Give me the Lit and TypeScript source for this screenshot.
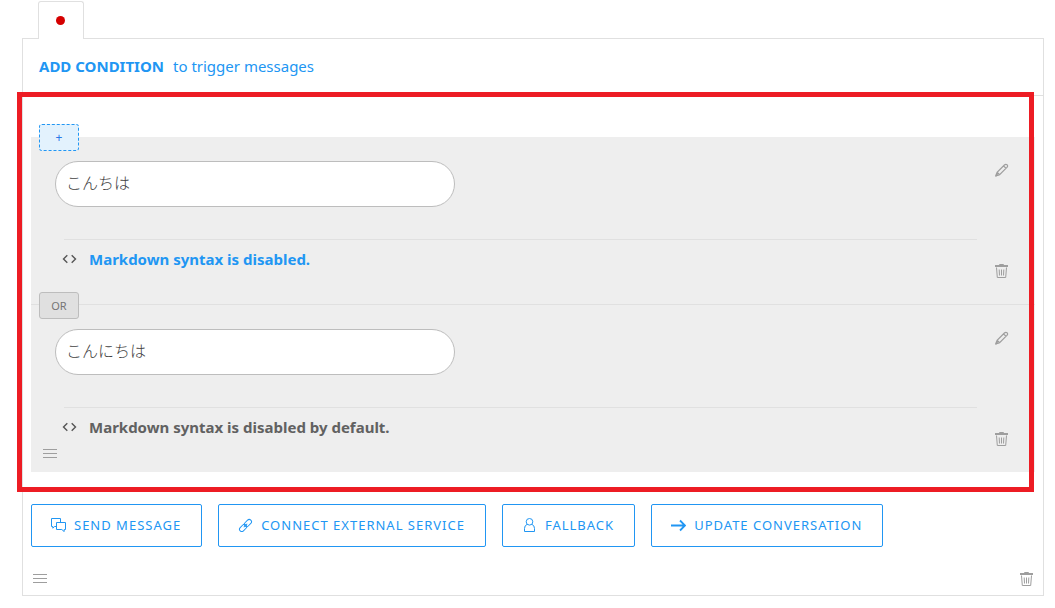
import { LitElement, html, css, svg, nothing } from "lit";
import { customElement, property, state } from "lit/decorators.js";
import { classMap } from "lit/directives/class-map.js";

const icons: Record<string, unknown> = {
  pencil: svg`<path d="M1 12.8 2.1 9.3 9.4 2 Q10.8 .7 12.1 1.8 Q13.2 3 11.9 4.4 L4.6 11.7Z M2.1 9.3 4.6 11.7 M8.5 2.9 11 5.3" stroke-width="1.2" /><path d="M.8 13 1.5 10.8 3 12.3Z" fill="currentColor" />`,
  trash: svg`<path d="M0 2H13" stroke-width="2" /><path d="M4.5 1V.5H8.5V1" /><path d="M1.5 3.5 2.3 13.5H10.7L11.5 3.5" /><path d="M4.2 5.5 4.5 11.5M6.5 5.5V11.5M8.8 5.5 8.5 11.5" />`,
  menu: svg`<path d="M0 2.5H14M0 6.5H14M0 10.5H14" />`,
  code: svg`<path d="M5.3 3.2 1.5 7 5.3 10.8M9.7 3.2 13.5 7 9.7 10.8" stroke-width="1.4" />`,
  chat: svg`<path d="M5 8.5H3.6L1.8 10.2V8.5H.5V.5H9.5V4" /><path d="M5.5 4.5H14.5V11.5H13.2V13.6L10.8 11.5H5.5Z" />`,
  link: svg`<g transform="rotate(-45 7.5 7.5)"><rect x="0" y="5.2" width="8.2" height="4.6" rx="2.3" /><rect x="6.8" y="5.2" width="8.2" height="4.6" rx="2.3" /><path d="M5 7.5H10" /></g>`,
  user: svg`<circle cx="7.5" cy="3.8" r="3.3" /><path d="M5 6.4Q2.5 7.5 2.5 10.5V13.5H12.5V10.5Q12.5 7.5 10 6.4" />`,
  arrow: svg`<path d="M0 7.5H14M9 2.5 14 7.5 9 12.5" stroke-width="1.8" />`,
};

const icon = (name: string, wide = false) => svg`<svg
  class="icon" aria-hidden="true" width=${wide ? 15 : 14} height="14"
  viewBox=${wide ? "0 0 15 14" : "0 0 14 14"} fill="none" stroke="currentColor">${icons[name]}</svg>`;

const base = css`
  * { box-sizing: border-box; }
  button, input { font: inherit; color: inherit; margin: 0; }
  button { padding: 0; border: 0; background: none; cursor: pointer; }
  .icon { display: block; flex: none; }
`;

@customElement("condition-row")
class ConditionRow extends LitElement {
  @property() value = "";
  @property() note = "";
  @property() tag = "";
  @property({ type: Boolean }) add = false;
  @property({ type: Boolean }) handle = false;

  static styles = [base, css`
    :host { display: flex; position: relative; background: #eee; }
    .tag {
      position: absolute; top: -13px; left: 8px; width: 40px; height: 27px;
      border: 1px solid #bdbdbd; border-radius: 3px; background: #e0e0e0;
      color: #757575; font-size: 11px; line-height: 25px; text-align: center;
    }
    .tag.add { border: 1px dashed #2196f3; background: #e3f2fd; color: #2979e8; font-size: 12px; }
    .body { flex: 1; min-width: 0; padding-left: 12px; }
    .text {
      display: block; width: 400px; max-width: 100%; height: 46px; margin: 24px 0 32px 12px;
      padding: 0 10px 4px; border: 1px solid #bdbdbd; border-radius: 23px; background: #fff;
      font-size: 16px; font-weight: 300; color: #424242;
    }
    .note {
      margin-left: 21px; border-top: 1px solid #e0e0e0; height: 40px; padding-bottom: 2px;
      display: flex; align-items: center;
    }
    .toggle { display: flex; align-items: center; gap: 12px; font-weight: 700; color: #616161; margin-left: -2px; }
    .toggle .icon { color: #555; }
    .toggle.active span { color: #2196f3; }
    .foot { display: flex; align-items: flex-start; height: 25px; color: #9e9e9e; }
    .side {
      width: 58px; padding: 26px 0 26px 18px; color: #9e9e9e;
      display: flex; flex-direction: column; justify-content: space-between; align-items: flex-start;
    }
  `];

  render() {
    return html`
      <button class=${classMap({ tag: true, add: this.add })}>${this.tag}</button>
      <div class="body">
        <input class="text" type="text" aria-label="Keyword" .value=${this.value} />
        <div class="note">
          <button class=${classMap({ toggle: true, active: this.add })}>
            ${icon("code", true)}<span>${this.note}</span>
          </button>
        </div>
        <div class="foot">
          ${this.handle ? html`<button aria-label="Reorder">${icon("menu")}</button>` : nothing}
        </div>
      </div>
      <div class="side">
        <button aria-label="Edit">${icon("pencil")}</button>
        <button aria-label="Delete">${icon("trash")}</button>
      </div>
    `;
  }
}

@customElement("app-root")
class AppRoot extends LitElement {
  @state() private conditions = [
    { value: "こんちは", note: "Markdown syntax is disabled.", tag: "+", add: true },
    { value: "こんにちは", note: "Markdown syntax is disabled by default.", tag: "OR", add: false },
  ];

  private actions = [
    { icon: "chat", label: "SEND MESSAGE" },
    { icon: "link", label: "CONNECT EXTERNAL SERVICE" },
    { icon: "user", label: "FALLBACK" },
    { icon: "arrow", label: "UPDATE CONVERSATION" },
  ];

  static styles = [base, css`
    :host {
      display: block; padding: 1px 11px 12px 22px; background: #fff; color: #616161;
      font-family: "Noto Sans", "Noto Sans CJK JP", sans-serif; font-size: 15px; line-height: 20px;
    }
    .tab {
      display: flex; align-items: center; justify-content: center; position: relative; z-index: 1;
      width: 46px; height: 38px; margin: 0 0 -1px 16px; padding-right: 1px; background: #fff;
      border: 1px solid #e0e0e0; border-bottom: 0; border-radius: 3px 3px 0 0;
    }
    .dot { width: 9px; height: 9px; border-radius: 50%; background: #d50000; }
    .panel { border: 1px solid #e0e0e0; }
    .head {
      height: 57px; padding: 0 16px 2px; border-bottom: 1px solid #e0e0e0;
      display: flex; align-items: center;
    }
    .trigger { display: flex; gap: 9px; color: #2196f3; }
    .conditions { position: relative; padding: 41px 8px 20px; }
    .conditions::after {
      content: ""; position: absolute; inset: -4px 9px 0 -6px;
      border: 5px solid #ed1c24; pointer-events: none;
    }
    .divider { height: 1px; background: #e0e0e0; }
    .actions { display: flex; flex-wrap: wrap; gap: 16px; padding: 12px 8px 0; }
    .action {
      display: flex; align-items: center; gap: 8px; height: 43px; padding: 0 20px 1px 19px;
      border: 1px solid #2196f3; border-radius: 2px; color: #2196f3;
      font-size: 13px; letter-spacing: 1px; white-space: nowrap;
    }
    .foot { display: flex; justify-content: space-between; padding: 25px 9px 9px 10px; color: #9e9e9e; }
  `];

  render() {
    return html`
      <button class="tab" aria-label="Condition status"><span class="dot"></span></button>
      <main class="panel">
        <header class="head">
          <button class="trigger"><strong>ADD CONDITION</strong><span>to trigger messages</span></button>
        </header>
        <section class="conditions">
          ${this.conditions.map((c, i) => html`
            ${i ? html`<div class="divider"></div>` : nothing}
            <condition-row .value=${c.value} .note=${c.note} .tag=${c.tag} .add=${c.add}
              .handle=${i === this.conditions.length - 1}></condition-row>
          `)}
        </section>
        <div class="actions">
          ${this.actions.map((a) => html`
            <button class="action">${icon(a.icon, true)}<span>${a.label}</span></button>
          `)}
        </div>
        <footer class="foot">
          <button aria-label="Reorder">${icon("menu")}</button>
          <button aria-label="Delete">${icon("trash")}</button>
        </footer>
      </main>
    `;
  }
}
